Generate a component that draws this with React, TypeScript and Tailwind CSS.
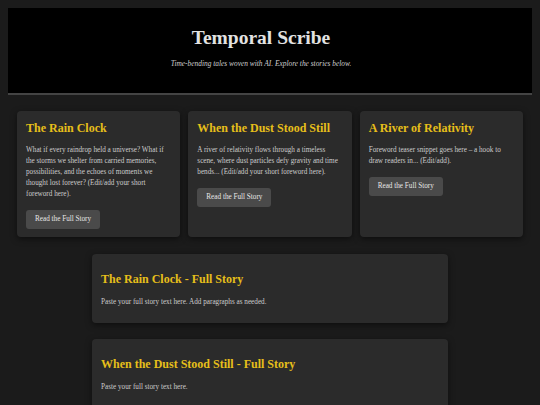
const stories = [
  {
    id: 'rain',
    title: 'The Rain Clock',
    teaser:
      'What if every raindrop held a universe? What if the storms we shelter from carried memories, possibilities, and the echoes of moments we thought lost forever? (Edit/add your short foreword here).',
    full: 'Paste your full story text here. Add paragraphs as needed.',
  },
  {
    id: 'dust',
    title: 'When the Dust Stood Still',
    teaser:
      'A river of relativity flows through a timeless scene, where dust particles defy gravity and time bends... (Edit/add your short foreword here).',
    full: 'Paste your full story text here.',
  },
  {
    id: 'river',
    title: 'A River of Relativity',
    teaser: 'Foreword teaser snippet goes here – a hook to draw readers in... (Edit/add).',
    full: '',
  },
];

export default function App() {
  return (
    <div className="min-h-screen bg-[#1b1b1b] text-[#d6d6d6] font-['Liberation_Serif',serif] p-2 overflow-hidden h-[405px]">
      {/* 页头 */}
      <header className="bg-black border-b-2 border-[#444] h-[87px] flex flex-col items-center pt-[18px] pr-[18px]">
        <h1 className="text-[19.5px] font-bold text-[#e2e2e2] leading-[24px]">Temporal Scribe</h1>
        <p className="mt-[9px] text-[7.4px] italic text-[#cfcfcf] leading-[10px]">
          Time-bending tales woven with AI. Explore the stories below.
        </p>
      </header>

      {/* 故事卡片 */}
      <div className="grid grid-cols-3 gap-[8px] px-[9px] mt-[16px]">
        {stories.map((s) => (
          <div
            key={s.id}
            className="h-[126px] bg-[#2b2b2b] rounded-[4px] shadow-[0_2px_6px_rgba(0,0,0,0.5)] px-[9px] pt-[10px]"
          >
            <h2 className="text-[12px] font-bold text-[#e6bf1a] leading-[14px]">{s.title}</h2>
            <p className="mt-[10px] text-[7.2px] leading-[11px] text-[#cccccc]">{s.teaser}</p>
            <button className="mt-[10px] h-[19px] px-[9px] bg-[#4a4a4a] rounded-[3px] text-[7.2px] text-[#e6e6e6]">
              Read the Full Story
            </button>
          </div>
        ))}
      </div>

      {/* 完整故事 */}
      <div className="flex flex-col items-center gap-[16px] mt-[17px]">
        {stories.slice(0, 2).map((s) => (
          <section
            key={s.id}
            className="w-[356px] h-[69px] bg-[#2b2b2b] rounded-[4px] shadow-[0_2px_6px_rgba(0,0,0,0.5)] px-[9px] pt-[18px] shrink-0"
          >
            <h2 className="text-[12px] font-bold text-[#e6bf1a] leading-[14px]">
              {s.title} - Full Story
            </h2>
            <p className="mt-[11px] text-[7.2px] leading-[10px] text-[#cccccc]">{s.full}</p>
          </section>
        ))}
      </div>
    </div>
  );
}
